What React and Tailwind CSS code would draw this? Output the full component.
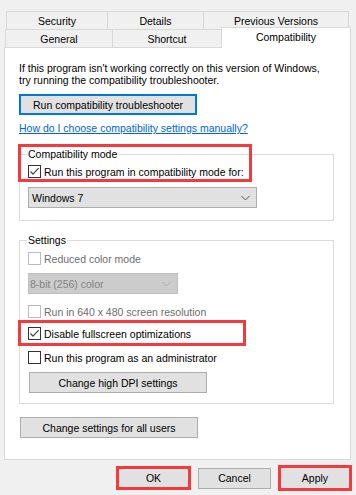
import React from "react";

function Check({ checked = false, disabled = false }) {
  return (
    <span
      className={
        disabled
          ? "w-[13px] h-[13px] border border-[#bcbcbc] bg-white flex items-center justify-center shrink-0"
          : "w-[13px] h-[13px] border border-[#333333] bg-white flex items-center justify-center shrink-0"
      }
    >
      {checked && (
        <svg width="11" height="11" viewBox="0 0 11 11">
          <path d="M1.5 5.5 L4 8.2 L9.6 2.2" fill="none" stroke="#444" strokeWidth="1.2" />
        </svg>
      )}
    </span>
  );
}

function Row({ checked, disabled, children, className }) {
  return (
    <div className={"flex items-center gap-[3px] h-[13px] " + className}>
      <Check checked={checked} disabled={disabled} />
      <span className={disabled ? "text-[#6d6d6d] whitespace-nowrap" : "whitespace-nowrap"}>{children}</span>
    </div>
  );
}

function Chevron({ color }) {
  return (
    <svg width="9" height="6" viewBox="0 0 9 6">
      <path d="M0.5 1 L4.5 5 L8.5 1" fill="none" stroke={color} strokeWidth="1" />
    </svg>
  );
}

export default function App() {
  return (
    <div className="w-[356px] h-[495px] bg-[#f0f0f0] pt-[11px] text-[10.5px] leading-[12px] text-black font-['Liberation_Sans',Arial,sans-serif] overflow-hidden">
      {/* tab row 1 */}
      <div className="flex h-[18px] ml-[6px]">
        <div className="w-[101px] flex items-center justify-center border-t border-l border-[#d9d9d9]">Security</div>
        <div className="w-[96px] flex items-center justify-center border-t border-l border-[#d9d9d9]">Details</div>
        <div className="w-[146px] flex items-center justify-center border-t border-x border-[#d9d9d9]">Previous Versions</div>
      </div>
      {/* tab row 2 */}
      <div className="flex items-start h-[18px] ml-[5px]">
        <div className="w-[107px] h-[18px] flex items-center justify-center border-t border-l border-[#d9d9d9]">General</div>
        <div className="w-[109px] h-[18px] flex items-center justify-center border-t border-l border-[#d9d9d9]">Shortcut</div>
        <div className="relative z-10 w-[130px] h-[21px] -mt-[2px] pb-[2px] flex items-center justify-center border-t border-x border-[#d9d9d9] bg-white">
          Compatibility
        </div>
      </div>

      {/* panel */}
      <div className="relative ml-[4px] w-[347px] h-[413px] border border-[#d9d9d9] bg-white pl-[14px] pt-[14px]">
        <p>
          If this program isn't working correctly on this version of Windows,
          <br />
          try running the compatibility troubleshooter.
        </p>
        <button className="mt-[8px] w-[178px] h-[21px] border-2 border-[#0078d7] bg-[#e1e1e1] flex items-center justify-center">
          Run compatibility troubleshooter
        </button>
        <div className="mt-[7px]">
          <span className="text-[#0066cc] underline">How do I choose compatibility settings manually?</span>
        </div>

        <fieldset className="mt-[14px] w-[315px] border border-[#dcdcdc] pl-[8px] pb-[12px]">
          <legend className="px-[1px] -ml-[1px]">Compatibility mode</legend>
          <Row checked className="mt-[5px]">Run this program in compatibility mode for:</Row>
          <div className="mt-[9px] w-[229px] h-[21px] border border-[#adadad] bg-[#e1e1e1] flex items-center justify-between pl-[3px] pr-[6px]">
            <span>Windows 7</span>
            <Chevron color="#555555" />
          </div>
        </fieldset>

        <fieldset className="mt-[13px] w-[315px] border border-[#dcdcdc] pl-[8px] pb-[10px]">
          <legend className="px-[1px] -ml-[1px]">Settings</legend>
          <Row disabled className="mt-[6px]">Reduced color mode</Row>
          <div className="mt-[8px] w-[150px] h-[21px] border border-[#bfbfbf] bg-[#cccccc] flex items-center justify-between pl-[1px] pr-[6px] text-[#838383]">
            <span>8-bit (256) color</span>
            <Chevron color="#a8a8a8" />
          </div>
          <Row disabled className="mt-[11px]">Run in 640 x 480 screen resolution</Row>
          <Row checked className="mt-[9px]">Disable fullscreen optimizations</Row>
          <Row className="mt-[11px]">Run this program as an administrator</Row>
          <button className="mt-[8px] ml-[1px] w-[178px] h-[21px] border border-[#adadad] bg-[#e1e1e1] flex items-center justify-center">
            Change high DPI settings
          </button>
        </fieldset>

        <button className="mt-[13px] ml-[1px] w-[178px] h-[21px] border border-[#adadad] bg-[#e1e1e1] flex items-center justify-center">
          Change settings for all users
        </button>

        {/* annotation overlays */}
        <div className="absolute left-[13px] top-[96px] w-[234px] h-[38px] border-[3px] border-[#f23a3f] pointer-events-none" />
        <div className="absolute left-[13px] top-[272px] w-[228px] h-[26px] border-[3px] border-[#f23a3f] pointer-events-none" />
      </div>

      {/* bottom buttons */}
      <div className="mt-[5px] h-[26px] flex items-center justify-end gap-[7px] pr-[4px]">
        <button className="w-[75px] h-[24px] border-[3px] border-[#f23a3f] bg-[#e1e1e1] flex items-center justify-center">OK</button>
        <button className="w-[73px] h-[21px] border border-[#adadad] bg-[#e1e1e1] flex items-center justify-center">Cancel</button>
        <button className="w-[74px] h-[26px] border-[3px] border-[#f23a3f] bg-[#e1e1e1] flex items-center justify-center">Apply</button>
      </div>
    </div>
  );
}
